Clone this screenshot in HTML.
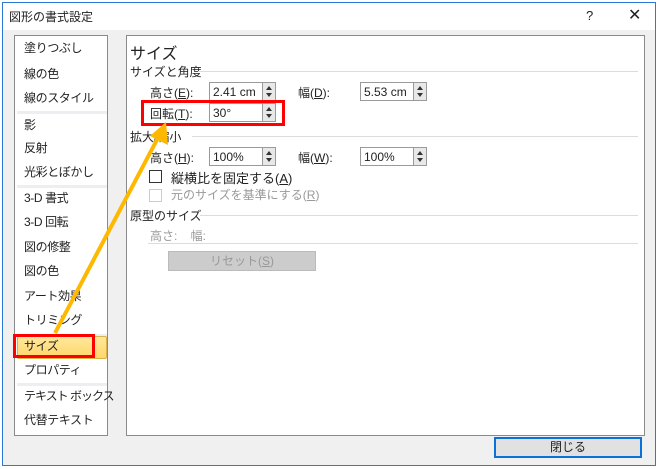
<!DOCTYPE html>
<html><head><meta charset="utf-8"><style>
*{margin:0;padding:0;box-sizing:border-box}
body{width:661px;height:469px;background:#fff;position:relative;overflow:hidden;font-family:"Liberation Sans","Noto Sans CJK JP",sans-serif;font-size:12px;color:#222}
.a{position:absolute;white-space:nowrap}
.li{letter-spacing:-0.4px}
.dlg{position:absolute;left:2px;top:2px;width:654px;height:464px;border:1px solid #2b7bd6;background:#f0f0f0}
.tb{position:absolute;left:0;top:0;width:652px;height:27px;background:#fff}
.lst{position:absolute;left:11px;top:32px;width:94px;height:401px;background:#fff;border:1px solid #8a8a8a}
.pn{position:absolute;left:123px;top:32px;width:519px;height:401px;background:#fff;border:1px solid #8a8a8a}
.sep{position:absolute;left:2px;width:90px;height:3px;background:#eeeef2}
.inp{position:absolute;height:19px;border:1px solid #9a9a9a;background:#fff;font-size:12px;padding:2px 3px}
.sp{position:absolute;width:14px;height:19px;border:1px solid #9a9a9a;background:#e8e8e8}
.sp:before{content:"";position:absolute;left:3px;top:3px;border:3px solid transparent;border-bottom:4px solid #333;border-top:0}
.sp:after{content:"";position:absolute;left:3px;top:10px;border:3px solid transparent;border-top:4px solid #333;border-bottom:0}
.hl{position:absolute;height:1px;background:#dcdcdc}
u{text-decoration:underline}
</style></head><body>
<div class="dlg">
<div class="tb"></div>
<div class="a" style="left:6px;top:5px;font-size:12px">図形の書式設定</div>
<div class="a" style="left:583px;top:5px;font-size:13px">?</div>
<div class="a" style="left:625px;top:2px;font-size:16px">✕</div>
<div class="lst">
<div class="sep" style="top:75px"></div>
<div class="sep" style="top:149px"></div>
<div class="sep" style="top:298px"></div>
<div class="sep" style="top:347px"></div>
<div style="position:absolute;left:2px;top:300px;width:90px;height:23px;background:linear-gradient(#ffe89a,#ffd66a);border:1px solid #d9b24a;border-radius:2px"></div>
</div>
<div class="pn"></div>
</div>
<div class="a li" style="left:24px;top:39px">塗りつぶし</div>
<div class="a li" style="left:24px;top:65px">線の色</div>
<div class="a li" style="left:24px;top:89px">線のスタイル</div>
<div class="a li" style="left:24px;top:116px">影</div>
<div class="a li" style="left:24px;top:139px">反射</div>
<div class="a li" style="left:24px;top:163px">光彩とぼかし</div>
<div class="a li" style="left:24px;top:189px">3-D 書式</div>
<div class="a li" style="left:24px;top:213px">3-D 回転</div>
<div class="a li" style="left:24px;top:238px">図の修整</div>
<div class="a li" style="left:24px;top:262px">図の色</div>
<div class="a li" style="left:24px;top:287px">アート効果</div>
<div class="a li" style="left:24px;top:311px">トリミング</div>
<div class="a li" style="left:24px;top:337px">サイズ</div>
<div class="a li" style="left:24px;top:361px">プロパティ</div>
<div class="a" style="left:24px;top:387px;letter-spacing:-1px">テキスト ボックス</div>
<div class="a li" style="left:24px;top:411px">代替テキスト</div>
<div style="position:absolute;left:13px;top:334px;width:82px;height:24px;border:3px solid #f00"></div>

<div class="a" style="left:130px;top:40px;font-size:16px">サイズ</div>
<div class="a" style="left:130px;top:63px">サイズと角度</div><div class="hl" style="left:198px;top:71px;width:440px"></div>
<div class="a" style="left:150px;top:84px">高さ(<u>E</u>):</div>
<div class="inp" style="left:209px;top:82px;width:54px">2.41 cm</div><div class="sp" style="left:262px;top:82px"></div>
<div class="a" style="left:298px;top:84px">幅(<u>D</u>):</div>
<div class="inp" style="left:360px;top:82px;width:54px">5.53 cm</div><div class="sp" style="left:413px;top:82px"></div>
<div class="a" style="left:150px;top:105px">回転(<u>T</u>):</div>
<div class="inp" style="left:209px;top:103px;width:54px">30°</div><div class="sp" style="left:262px;top:103px"></div>
<div style="position:absolute;left:141px;top:100px;width:144px;height:26px;border:3px solid #f00"></div>
<div class="a" style="left:130px;top:128px">拡大/縮小</div><div class="hl" style="left:192px;top:136px;width:446px"></div>
<div class="a" style="left:150px;top:149px">高さ(<u>H</u>):</div>
<div class="inp" style="left:209px;top:147px;width:54px">100%</div><div class="sp" style="left:262px;top:147px"></div>
<div class="a" style="left:298px;top:149px">幅(<u>W</u>):</div>
<div class="inp" style="left:360px;top:147px;width:54px">100%</div><div class="sp" style="left:413px;top:147px"></div>
<div style="position:absolute;left:149px;top:170px;width:13px;height:13px;border:1px solid #333;background:#fff"></div>
<div class="a" style="left:171px;top:168px;font-size:13px">縦横比を固定する(<u>A</u>)</div>
<div style="position:absolute;left:149px;top:189px;width:13px;height:13px;border:1px solid #ccc;background:#fff"></div>
<div class="a" style="left:171px;top:186px;color:#999">元のサイズを基準にする(<u>R</u>)</div>
<div class="a" style="left:130px;top:207px">原型のサイズ</div><div class="hl" style="left:200px;top:215px;width:438px"></div>
<div class="a" style="left:150px;top:227px;color:#999">高さ:&nbsp;&nbsp;&nbsp;&nbsp;幅:</div>
<div class="hl" style="left:148px;top:243px;width:490px"></div>
<div style="position:absolute;left:168px;top:251px;width:148px;height:20px;background:#ccc;border:1px solid #bbb;color:#999;text-align:center;line-height:18px">リセット(<u>S</u>)</div>
<div style="position:absolute;left:494px;top:437px;width:148px;height:21px;background:#e1e1e1;border:2px solid #0a72d6;text-align:center;line-height:17px">閉じる</div>
<svg width="661" height="469" style="position:absolute;left:0;top:0">
<line x1="55" y1="333" x2="160" y2="134" stroke="#ffb800" stroke-width="4"/>
<polygon points="166,122 168,145 150,136" fill="#ffb800"/>
</svg>
</body></html>
